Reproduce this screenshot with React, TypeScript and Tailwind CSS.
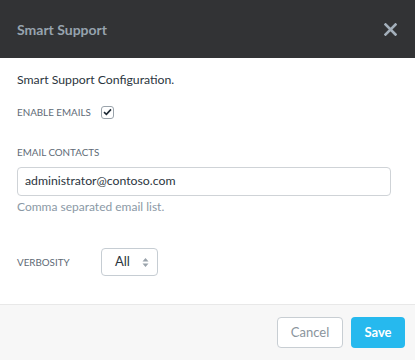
import React from "react";

export default function App() {
  return (
    <div className="w-[415px] h-[360px] bg-white flex flex-col overflow-hidden" style={{ fontFamily: "Lato, 'Open Sans', sans-serif" }}>
      <div className="h-[58px] shrink-0 bg-[#323335] flex items-center justify-between pl-[17px] pr-[18px]">
        <div className="text-[14px] font-bold text-[#97a3ae]">Smart Support</div>
        <svg width="13" height="13" viewBox="0 0 13 13" className="text-[#a3afba]">
          <path d="M1.5 1.5 L11.5 11.5 M11.5 1.5 L1.5 11.5" stroke="currentColor" strokeWidth="2.6" strokeLinecap="square" />
        </svg>
      </div>
      <div className="flex-1 flex flex-col px-[17px] pt-[14px]">
        <div className="text-[12.25px] text-[#2b3540] leading-[16px]">Smart Support Configuration.</div>
        <div className="flex items-center mt-[16px] h-[16px]">
          <span className="text-[9.8px] text-[#5e6a76] w-[84px]">ENABLE EMAILS</span>
          <span className="w-[13px] h-[13px] rounded-[3px] border border-[#9aa3ab] flex items-center justify-center">
            <svg width="9" height="8" viewBox="0 0 9 8">
              <path d="M1 4.2 L3.4 6.4 L8 1.4" fill="none" stroke="#1f2a35" strokeWidth="1.6" />
            </svg>
          </span>
        </div>
        <div className="text-[9.8px] text-[#5e6a76] mt-[25px] leading-[14px]">EMAIL CONTACTS</div>
        <div className="mt-[8px] h-[29px] w-[374px] border border-[#cfd3d7] rounded-[4px] flex items-center px-[7px] text-[12.25px] text-[#2b3540]">administrator@contoso.com</div>
        <div className="mt-[3px] text-[12px] text-[#8b99a6] leading-[16px]">Comma separated email list.</div>
        <div className="flex items-center mt-[33px]">
          <span className="text-[9.8px] text-[#5e6a76] w-[84px]">VERBOSITY</span>
          <div className="w-[57px] h-[28px] border border-[#c6cdd3] rounded-[4px] flex items-center pl-[13px] pr-[8px] justify-between">
            <span className="text-[13px] text-[#2b3540]">All</span>
            <svg width="7" height="11" viewBox="0 0 7 11">
              <path d="M0.5 4.5 L3.5 1 L6.5 4.5 Z M0.5 6.5 L3.5 10 L6.5 6.5 Z" fill="#9aa3ab" />
            </svg>
          </div>
        </div>
      </div>
      <div className="h-[56px] shrink-0 bg-[#f7f7f7] border-t border-[#e8e8e8] flex items-center justify-end gap-[8px] pr-[10px]">
        <button className="w-[66px] h-[31px] rounded-[4px] border border-[#c8ced3] bg-white text-[13px] text-[#8a949c]">Cancel</button>
        <button className="w-[54px] h-[31px] rounded-[4px] bg-[#26b9ee] text-[13px] font-bold text-white">Save</button>
      </div>
    </div>
  );
}
